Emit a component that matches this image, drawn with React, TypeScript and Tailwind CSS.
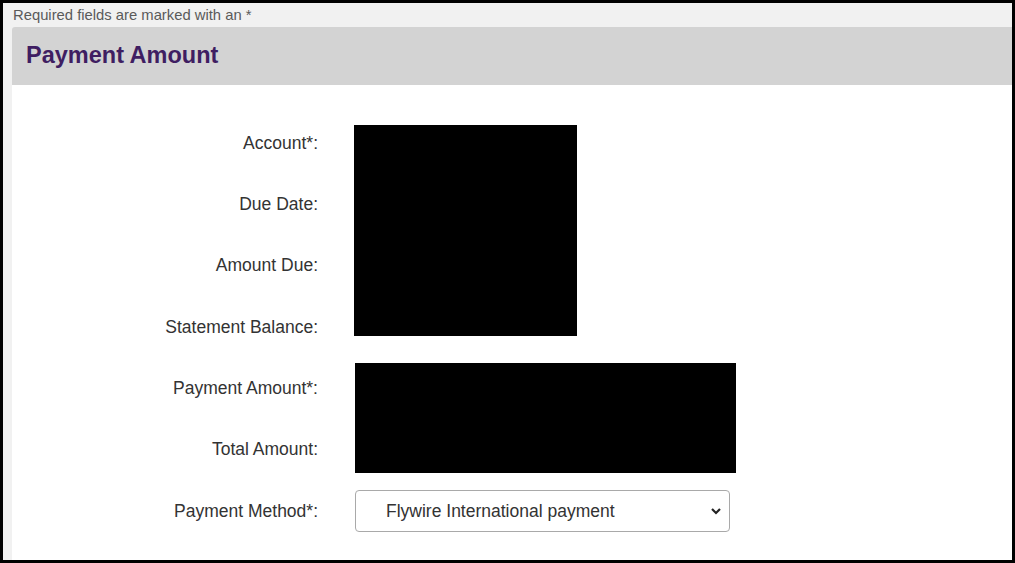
import { useState } from "react";

const font = { fontFamily: '"Liberation Sans", Arial, sans-serif' };

const Label = ({ text }: { text: string }) => (
  <div className="flex h-[61.33px] items-center justify-end text-[17.5px] text-[#333333]">
    {text}
  </div>
);

const App = () => {
  const [method, setMethod] = useState("flywire");

  return (
    <div
      className="flex h-[563px] w-[1015px] flex-col border-[3px] border-black bg-[#f1f1f1]"
      style={font}
    >
      <p className="h-[24px] pl-[10px] pt-[3px] text-[14.8px] leading-[18px] text-[#5a5a5a]">
        Required fields are marked with an *
      </p>
      <section className="ml-[9px] flex flex-1 flex-col">
        <header className="flex h-[58px] items-center rounded-tl-[3px] bg-[#d3d3d3] pl-[14px]">
          <h2 className="text-[23.5px] font-bold text-[#3f1e62]">Payment Amount</h2>
        </header>
        <div className="flex-1 bg-white pt-[27px]">
          {/* account details */}
          <div className="flex">
            <div className="w-[306px]">
              <Label text="Account*:" />
              <Label text="Due Date:" />
              <Label text="Amount Due:" />
              <Label text="Statement Balance:" />
            </div>
            <div className="ml-[36px] mt-[13px] h-[211px] w-[223px] bg-black" />
          </div>

          {/* amounts */}
          <div className="flex">
            <div className="w-[306px]">
              <Label text="Payment Amount*:" />
              <Label text="Total Amount:" />
            </div>
            <div className="ml-[37px] mt-[6px] h-[110px] w-[381px] bg-black" />
          </div>

          {/* method */}
          <div className="flex items-center">
            <div className="w-[306px]">
              <Label text="Payment Method*:" />
            </div>
            <div className="relative ml-[37px] h-[42px] w-[375px]">
              <select
                value={method}
                onChange={(e) => setMethod(e.target.value)}
                className="h-full w-full appearance-none rounded-[4px] border border-[#a9a9a9] bg-white pl-[30px] text-[17.5px] text-[#333333] outline-none"
                style={font}
              >
                <option value="flywire">Flywire International payment</option>
                <option value="card">Credit Card</option>
              </select>
              <svg
                className="pointer-events-none absolute right-[8px] top-[16px] h-[10px] w-[12px]"
                viewBox="0 0 12 10"
                fill="none"
                stroke="#222"
                strokeWidth="2.2"
              >
                <path d="M2 3l4 4 4-4" />
              </svg>
            </div>
          </div>
        </div>
      </section>
    </div>
  );
};

export default App;
